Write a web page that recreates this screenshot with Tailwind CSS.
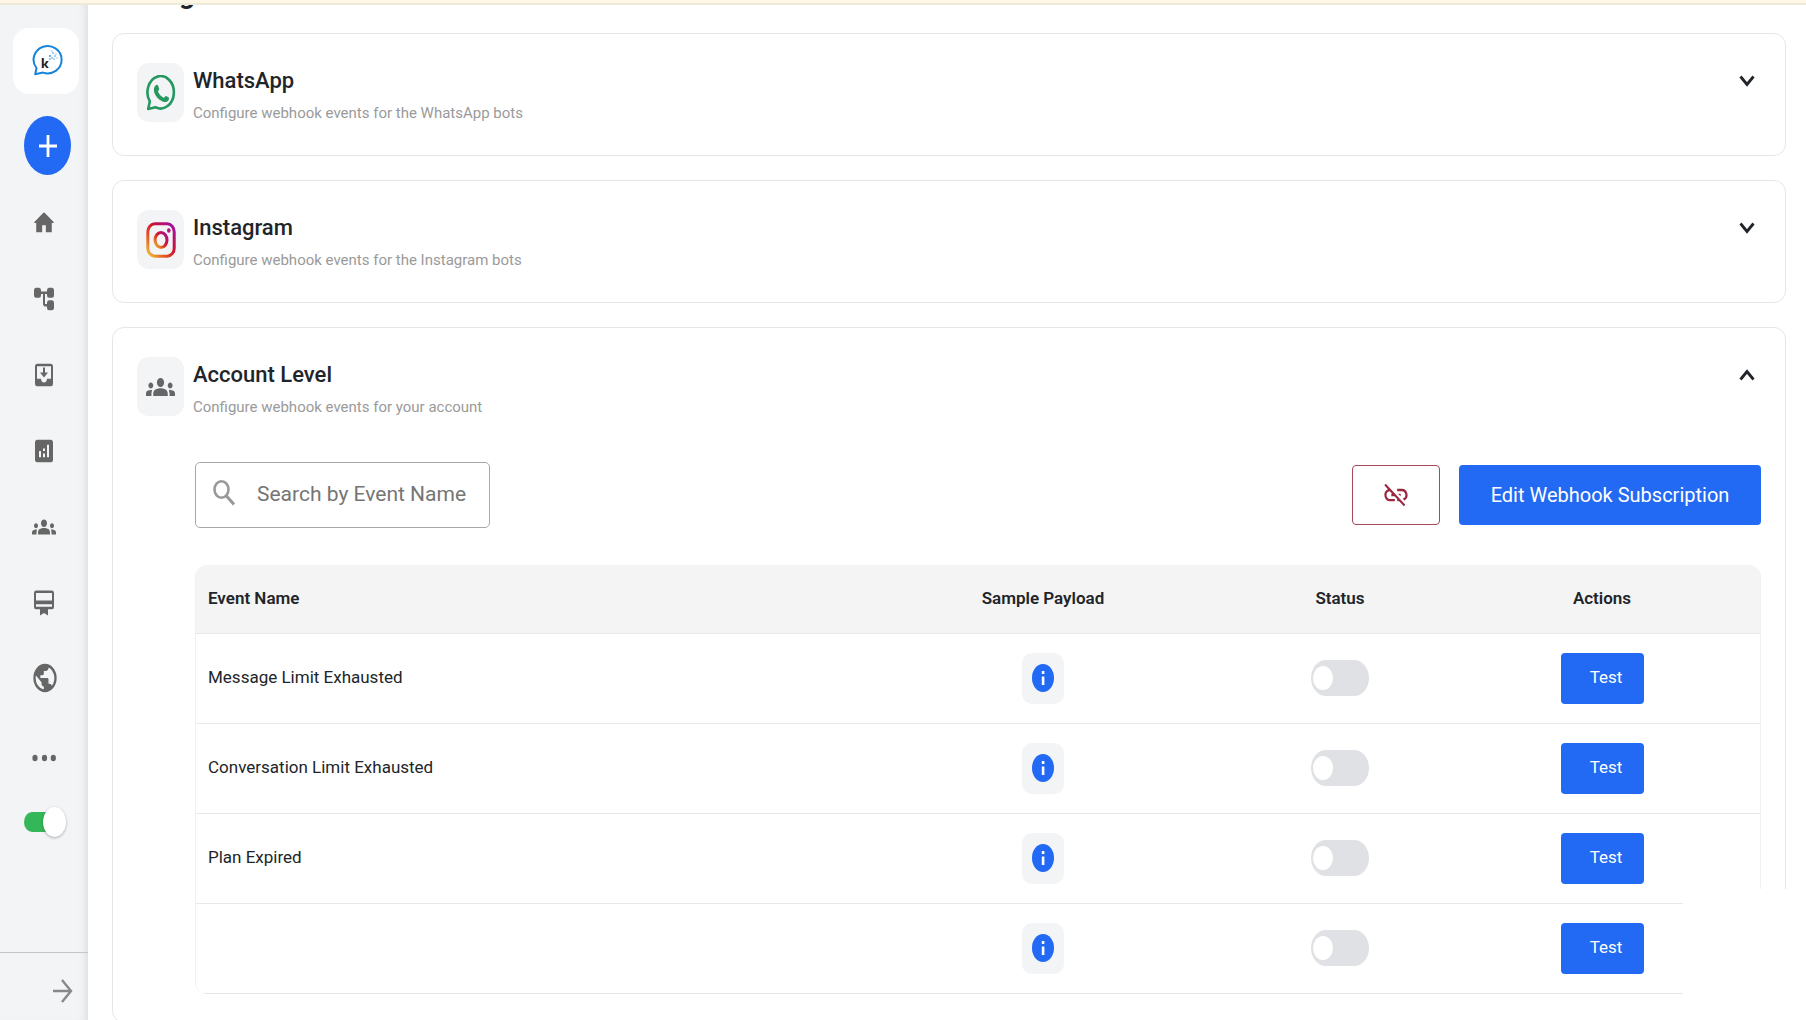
<!DOCTYPE html>
<html lang="en">
<head>
  <meta charset="UTF-8" />
  <meta name="viewport" content="width=device-width, initial-scale=1.0" />
  <title>Webhook Configuration</title>
  <script src="https://cdn.jsdelivr.net/npm/@tailwindcss/browser@4"></script>
</head>
<body class="relative flex h-screen flex-col overflow-hidden bg-white font-[Roboto,sans-serif] text-[#212529]">

  <!-- shared icons -->
  <svg class="hidden">
    <symbol id="groups" viewBox="0 0 24 24" preserveAspectRatio="none">
      <path d="M12 12.75c1.63 0 3.07.39 4.24.9 1.08.48 1.76 1.56 1.76 2.73V18H6v-1.61c0-1.18.68-2.26 1.76-2.73 1.17-.52 2.61-.91 4.24-.91zM4 13c1.1 0 2-.9 2-2s-.9-2-2-2-2 .9-2 2 .9 2 2 2zm1.13 1.1c-.37-.06-.74-.1-1.13-.1-.99 0-1.93.21-2.78.58C.48 14.9 0 15.62 0 16.43V18h4.500v-1.610c0-.83.23-1.610.63-2.290zM20 13c1.100 0 2-.9 2-2s-.9-2-2-2-2 .9-2 2 .9 2 2 2zm4 3.430c0-.81-.48-1.530-1.220-1.850-.85-.37-1.790-.58-2.780-.58-.39 0-.76.04-1.130.1.400.68.630 1.460.630 2.290V18H24v-1.570zM12 6c1.660 0 3 1.340 3 3s-1.340 3-3 3-3-1.340-3-3 1.340-3 3-3z"/>
    </symbol>
    <symbol id="info" viewBox="0 0 22 28">
      <ellipse cx="11" cy="14" rx="11" ry="14" fill="#2269f3"/>
      <path d="M9.800 7h2.600v3H9.800zM9.800 12.500h2.600V21H9.800z" fill="#fff"/>
    </symbol>
    <symbol id="chevron" viewBox="0 0 16 12">
      <path d="M1.500 1.500l6.500 8 6.500-8" fill="none" stroke="#212529" stroke-width="2.800"/>
    </symbol>
  </svg>

  <div class="h-[5px] shrink-0 border-b-2 border-[#efe9d9] bg-[#fff7e4]"></div>

  <div class="flex min-h-0 flex-1">
    <!-- sidebar -->
    <aside class="flex w-[88px] shrink-0 flex-col bg-[#f2f4f6] pt-[23px] shadow-[inset_-8px_0_8px_-6px_rgba(0,0,0,0.1)]">
      <a href="#" aria-label="Home page" class="ml-[13px] flex h-[66px] w-[66px] items-center justify-center rounded-[16px] bg-white">
        <svg class="mb-[2px] ml-1 h-8 w-8" viewBox="0 0 32 32">
          <path d="M3.200 30.200 4.500 24A14 13.700 0 1 1 11 28.600z" fill="none" stroke="#1585dc" stroke-width="2" stroke-linejoin="round"/>
          <text x="9" y="23.500" font-family="Lato, sans-serif" font-weight="900" font-size="14" fill="#222">k</text>
          <g fill="#2f93e0"><circle cx="18" cy="12" r="1"/><circle cx="21" cy="9" r=".8"/><circle cx="20" cy="14" r=".8"/><circle cx="23" cy="12" r=".8"/><circle cx="22" cy="15" r=".7"/><circle cx="24" cy="10" r=".6"/><circle cx="18" cy="15" r=".8"/><circle cx="25" cy="14" r=".6"/><circle cx="20" cy="7" r=".6"/></g>
        </svg>
      </a>
      <button aria-label="Create new" class="mt-[22px] ml-6 flex h-[59px] w-[47px] items-center justify-center rounded-[50%] bg-[#2269f3]">
        <svg class="h-[22px] w-[18px]" viewBox="0 0 18 22"><path d="M9 0v22M0 11h18" stroke="#fff" stroke-width="2.800"/></svg>
      </button>

      <nav class="mt-[10px] flex flex-col fill-[#666]">
        <a href="#" aria-label="Home" class="flex h-[76px] items-center justify-center">
          <svg class="h-7 w-[22px]" viewBox="0 0 24 24" preserveAspectRatio="none"><path d="M10 20v-6h4v6h5.500a1 1 0 0 0 1-1v-7h1.700c.5 0 .7-.5.300-.8L12.700 3.300a1 1 0 0 0-1.400 0L1.500 11.200c-.4.300-.2.800.300.800h1.700v7a1 1 0 0 0 1 1z"/></svg>
        </a>
        <a href="#" aria-label="Flows" class="flex h-[76px] items-center justify-center">
          <svg class="h-[30px] w-6" viewBox="0 0 24 24" preserveAspectRatio="none"><path d="M22 9V5a2 2 0 0 0-2-2h-3a2 2 0 0 0-2 2v1H9V5a2 2 0 0 0-2-2H4a2 2 0 0 0-2 2v4a2 2 0 0 0 2 2h3a2 2 0 0 0 2-2V8h2v7.500a2.500 2.500 0 0 0 2.500 2.500H15v1a2 2 0 0 0 2 2h3a2 2 0 0 0 2-2v-4a2 2 0 0 0-2-2h-3a2 2 0 0 0-2 2v1h-1.500a.5.500 0 0 1-.5-.5V8h2v1a2 2 0 0 0 2 2h3a2 2 0 0 0 2-2z"/></svg>
        </a>
        <a href="#" aria-label="Inbox" class="flex h-[76px] items-center justify-center">
          <svg class="h-[30px] w-6" viewBox="0 0 24 24" preserveAspectRatio="none"><path d="M19 3H5a2 2 0 0 0-2 2v14c0 1.100.9 2 2 2h14a2 2 0 0 0 2-2V5a2 2 0 0 0-2-2zm0 12h-4c0 1.660-1.350 3-3 3s-3-1.340-3-3H5V5h14v10zm-3-5h-3V6h-2v4H8l4 4 4-4z"/></svg>
        </a>
        <a href="#" aria-label="Analytics" class="flex h-[76px] items-center justify-center">
          <svg class="h-[30px] w-6" viewBox="0 0 24 24" preserveAspectRatio="none"><path d="M19 3H5a2 2 0 0 0-2 2v14c0 1.100.9 2 2 2h14a2 2 0 0 0 2-2V5a2 2 0 0 0-2-2zM9 17H7v-5h2v5zm4 0h-2v-3h2v3zm0-5h-2v-2h2v2zm4 5h-2V7h2v10z"/></svg>
        </a>
        <a href="#" aria-label="Contacts" class="flex h-[76px] items-center justify-center">
          <svg class="h-[30px] w-6"><use href="#groups"/></svg>
        </a>
        <a href="#" aria-label="Plans" class="flex h-[76px] items-center justify-center">
          <svg class="h-[30px] w-6" viewBox="0 0 24 24" preserveAspectRatio="none"><path d="M20 2H4a2 2 0 0 0-2 2v11a2 2 0 0 0 2 2h4v5l4-2 4 2v-5h4a2 2 0 0 0 2-2V4a2 2 0 0 0-2-2zm0 13H4v-2h16v2zm0-5H4V4h16v6z"/></svg>
        </a>
        <a href="#" aria-label="Website" class="flex h-[74px] items-center justify-center">
          <svg class="ml-[2px] h-[34px] w-7" viewBox="0 0 24 24" preserveAspectRatio="none"><path d="M12 2a10 10 0 1 0 0 20 10 10 0 0 0 0-20zm-1 17.930A8 8 0 0 1 4.210 10.210L9 15v1c0 1.100.9 2 2 2v1.930zm6.900-2.540A2 2 0 0 0 16 16h-1v-3c0-.55-.45-1-1-1H8v-2h2c.55 0 1-.45 1-1V7h2c1.100 0 2-.9 2-2v-.41a8 8 0 0 1 2.900 12.800z"/></svg>
        </a>
        <a href="#" aria-label="More" class="flex h-[86px] items-center justify-center">
          <svg class="h-2 w-6" viewBox="0 0 24 8"><ellipse cx="3" cy="4" rx="2.600" ry="3.200"/><ellipse cx="12.500" cy="4" rx="2.600" ry="3.200"/><ellipse cx="21.300" cy="4" rx="2.600" ry="3.200"/></svg>
        </a>
      </nav>

      <input type="checkbox" checked aria-label="Availability" class="relative mt-[11px] ml-6 h-5 w-9 appearance-none rounded-[8px/10px] bg-[#34b758] before:absolute before:top-[-5px] before:left-[19px] before:h-[30px] before:w-[23px] before:rounded-[50%] before:bg-white before:shadow-[0_1px_3px_rgba(0,0,0,0.3)] before:content-['']" />

      <div class="mt-auto flex h-[68px] items-center border-t border-[#c4c6c8] pt-2 pl-[53px]">
        <button aria-label="Expand menu">
          <svg class="block h-6 w-5" viewBox="0 0 20 24"><path d="M0 12h18M9 1l9 11-9 11" fill="none" stroke="#888" stroke-width="2.400"/></svg>
        </button>
      </div>
    </aside>

    <!-- content -->
    <main class="flex min-w-0 flex-1 flex-col gap-6 overflow-hidden pr-5 pl-6">
      <!-- heading, scrolled almost out of view -->
      <div class="-mb-6 flex h-7 shrink-0 items-start overflow-hidden">
        <h1 class="-mt-[29px] text-[28px] leading-9 font-bold">Configure</h1>
      </div>

      <section class="flex h-[123px] shrink-0 items-start rounded-[12px] border border-[#e6e6e6] px-6 pt-[29px]">
        <div class="flex h-[59px] w-[47px] items-center justify-center rounded-[12px] bg-[#f2f4f6]">
          <svg class="h-9 w-[30px]" viewBox="0 0 30 36">
            <path d="M2.200 34 3.800 26.500A13.200 16.200 0 1 1 9.500 32.200z" fill="none" stroke="#25975f" stroke-width="2.600" stroke-linejoin="round"/>
            <path d="M9.500 10.500c1-1 2-1 2.500 0l1.200 3.200c.2.800-1.400 2.200-1.200 2.800 1 2.800 3.200 5 5.500 6.200.8.300 1.800-2 2.600-1.700l2.700 1.600c.7.500 0 2.600-.8 3.400-1.400 1.400-3.400 1.300-5.500.4-4.200-1.800-7.400-5.600-8.400-9.600-.5-2.200-.2-4.700 1.400-6.300z" fill="#25975f"/>
          </svg>
        </div>
        <div class="ml-[9px] flex-1">
          <h2 class="text-[22px] leading-9 font-medium">WhatsApp</h2>
          <p class="text-[15px] leading-7 text-[#9a9a9a]">Configure webhook events for the WhatsApp bots</p>
        </div>
        <button aria-label="Expand WhatsApp" class="mt-3 mr-[6px]"><svg class="block h-3 w-4"><use href="#chevron"/></svg></button>
      </section>

      <section class="flex h-[123px] shrink-0 items-start rounded-[12px] border border-[#e6e6e6] px-6 pt-[29px]">
        <div class="flex h-[59px] w-[47px] items-center justify-center rounded-[12px] bg-[#f2f4f6]">
          <svg class="h-9 w-[30px]" viewBox="0 0 30 36">
            <defs>
              <linearGradient id="insta" x1="0" y1="1" x2="1" y2="0">
                <stop offset="0" stop-color="#f2c33a"/><stop offset=".3" stop-color="#e65a24"/><stop offset=".58" stop-color="#cc1230"/><stop offset="1" stop-color="#a00fae"/>
              </linearGradient>
            </defs>
            <rect x="1.800" y="1.800" width="26.400" height="32.400" rx="7" ry="8" fill="none" stroke="url(#insta)" stroke-width="3"/>
            <ellipse cx="15" cy="18" rx="6" ry="7.500" fill="none" stroke="url(#insta)" stroke-width="3"/>
            <ellipse cx="22.800" cy="8.500" rx="1.800" ry="2.200" fill="#b5127c"/>
          </svg>
        </div>
        <div class="ml-[9px] flex-1">
          <h2 class="text-[22px] leading-9 font-medium">Instagram</h2>
          <p class="text-[15px] leading-7 text-[#9a9a9a]">Configure webhook events for the Instagram bots</p>
        </div>
        <button aria-label="Expand Instagram" class="mt-3 mr-[6px]"><svg class="block h-3 w-4"><use href="#chevron"/></svg></button>
      </section>

      <section class="shrink-0 rounded-[12px] border border-[#e6e6e6] px-6 pt-[29px] pb-7">
        <div class="flex items-start">
          <div class="flex h-[59px] w-[47px] items-center justify-center rounded-[12px] bg-[#f2f4f6]">
            <svg class="h-9 w-[29px] fill-[#666]"><use href="#groups"/></svg>
          </div>
          <div class="ml-[9px] flex-1">
            <h2 class="text-[22px] leading-9 font-medium">Account Level</h2>
            <p class="text-[15px] leading-7 text-[#9a9a9a]">Configure webhook events for your account</p>
          </div>
          <button aria-label="Collapse Account Level" class="mt-3 mr-[6px]"><svg class="block h-3 w-4 rotate-180"><use href="#chevron"/></svg></button>
        </div>

        <div class="mt-[41px] ml-[58px] flex items-center">
          <label class="flex h-[66px] w-[295px] items-center rounded-[5px] border border-[#a8a8a8] pl-[17px]">
            <svg class="mb-1 h-[26px] w-[22px] shrink-0" viewBox="0 0 22 26"><ellipse cx="8.500" cy="9.500" rx="7" ry="8.200" fill="none" stroke="#999" stroke-width="2.600"/><path d="M13 15.500l8 9" stroke="#999" stroke-width="3"/></svg>
            <input type="text" aria-label="Search by Event Name" placeholder="Search by Event Name" class="ml-[22px] w-full min-w-0 text-[21px] outline-none placeholder:text-[#757575]" />
          </label>
          <button aria-label="Unlink webhook" class="ml-auto flex h-[60px] w-[88px] items-center justify-center rounded-[4px] border border-[#a8485a]">
            <svg class="h-[30px] w-[28px] fill-[#9b2740]" viewBox="0 0 24 24" preserveAspectRatio="none"><path d="M17 7h-4v1.900h4a3.100 3.100 0 0 1 .75 6.080l1.460 1.460A5 5 0 0 0 17 7zm-1 4h-2.190l2 2H16v-2zM2 4.270l3.110 3.110A5 5 0 0 0 7 17h4v-1.900H7a3.100 3.100 0 0 1-.41-6.170L8.660 11H8v2h2.730L13 15.270V17h1.730l4.010 4L20 19.740 3.270 3 2 4.270z"/></svg>
          </button>
          <button class="ml-[19px] h-[60px] w-[302px] rounded-[4px] bg-[#2269f3] text-[20px] text-white">Edit Webhook Subscription</button>
        </div>

        <div class="mt-[37px] ml-[58px] overflow-hidden rounded-[12px] border-x border-[#f1f1f1]">
          <table class="w-full table-fixed text-[17px]">
            <thead>
              <tr class="h-[68px] border-b border-[#e8e8e8] bg-[#f4f4f4]">
                <th class="pl-3 text-left font-semibold">Event Name</th>
                <th class="w-[386px] font-semibold">Sample Payload</th>
                <th class="w-[208px] font-semibold">Status</th>
                <th class="w-[316px] font-semibold">Actions</th>
              </tr>
            </thead>
            <tbody class="text-center">
              <tr class="h-[90px] border-b border-[#e8e8e8]">
                <td class="pl-3 text-left">Message Limit Exhausted</td>
                <td><button aria-label="Sample payload" class="inline-flex h-[51px] w-[42px] items-center justify-center rounded-[10px] bg-[#f2f4f6] align-middle"><svg class="h-7 w-[22px]"><use href="#info"/></svg></button></td>
                <td><input type="checkbox" aria-label="Message Limit Exhausted status" class="relative h-9 w-[58px] appearance-none rounded-[15px/18px] bg-[#dfe1e5] align-middle before:absolute before:top-[6px] before:left-[2px] before:h-6 before:w-[20px] before:rounded-[50%] before:bg-white before:content-['']" /></td>
                <td><button class="h-[51px] w-[83px] rounded-[4px] bg-[#2269f3] pl-2 align-middle text-white">Test</button></td>
              </tr>
              <tr class="h-[90px] border-b border-[#e8e8e8]">
                <td class="pl-3 text-left">Conversation Limit Exhausted</td>
                <td><button aria-label="Sample payload" class="inline-flex h-[51px] w-[42px] items-center justify-center rounded-[10px] bg-[#f2f4f6] align-middle"><svg class="h-7 w-[22px]"><use href="#info"/></svg></button></td>
                <td><input type="checkbox" aria-label="Conversation Limit Exhausted status" class="relative h-9 w-[58px] appearance-none rounded-[15px/18px] bg-[#dfe1e5] align-middle before:absolute before:top-[6px] before:left-[2px] before:h-6 before:w-[20px] before:rounded-[50%] before:bg-white before:content-['']" /></td>
                <td><button class="h-[51px] w-[83px] rounded-[4px] bg-[#2269f3] pl-2 align-middle text-white">Test</button></td>
              </tr>
              <tr class="h-[90px] border-b border-[#e8e8e8]">
                <td class="pl-3 text-left">Plan Expired</td>
                <td><button aria-label="Sample payload" class="inline-flex h-[51px] w-[42px] items-center justify-center rounded-[10px] bg-[#f2f4f6] align-middle"><svg class="h-7 w-[22px]"><use href="#info"/></svg></button></td>
                <td><input type="checkbox" aria-label="Plan Expired status" class="relative h-9 w-[58px] appearance-none rounded-[15px/18px] bg-[#dfe1e5] align-middle before:absolute before:top-[6px] before:left-[2px] before:h-6 before:w-[20px] before:rounded-[50%] before:bg-white before:content-['']" /></td>
                <td><button class="h-[51px] w-[83px] rounded-[4px] bg-[#2269f3] pl-2 align-middle text-white">Test</button></td>
              </tr>
              <tr class="h-[90px] border-b border-[#e8e8e8]">
                <td></td>
                <td><button aria-label="Sample payload" class="inline-flex h-[51px] w-[42px] items-center justify-center rounded-[10px] bg-[#f2f4f6] align-middle"><svg class="h-7 w-[22px]"><use href="#info"/></svg></button></td>
                <td><input type="checkbox" aria-label="Event status" class="relative h-9 w-[58px] appearance-none rounded-[15px/18px] bg-[#dfe1e5] align-middle before:absolute before:top-[6px] before:left-[2px] before:h-6 before:w-[20px] before:rounded-[50%] before:bg-white before:content-['']" /></td>
                <td><button class="h-[51px] w-[83px] rounded-[4px] bg-[#2269f3] pl-2 align-middle text-white">Test</button></td>
              </tr>
            </tbody>
          </table>
        </div>
      </section>
    </main>
  </div>

  <!-- blank area over the bottom right corner -->
  <div class="absolute right-0 bottom-0 h-[131px] w-[123px] bg-white"></div>
</body>
</html>
